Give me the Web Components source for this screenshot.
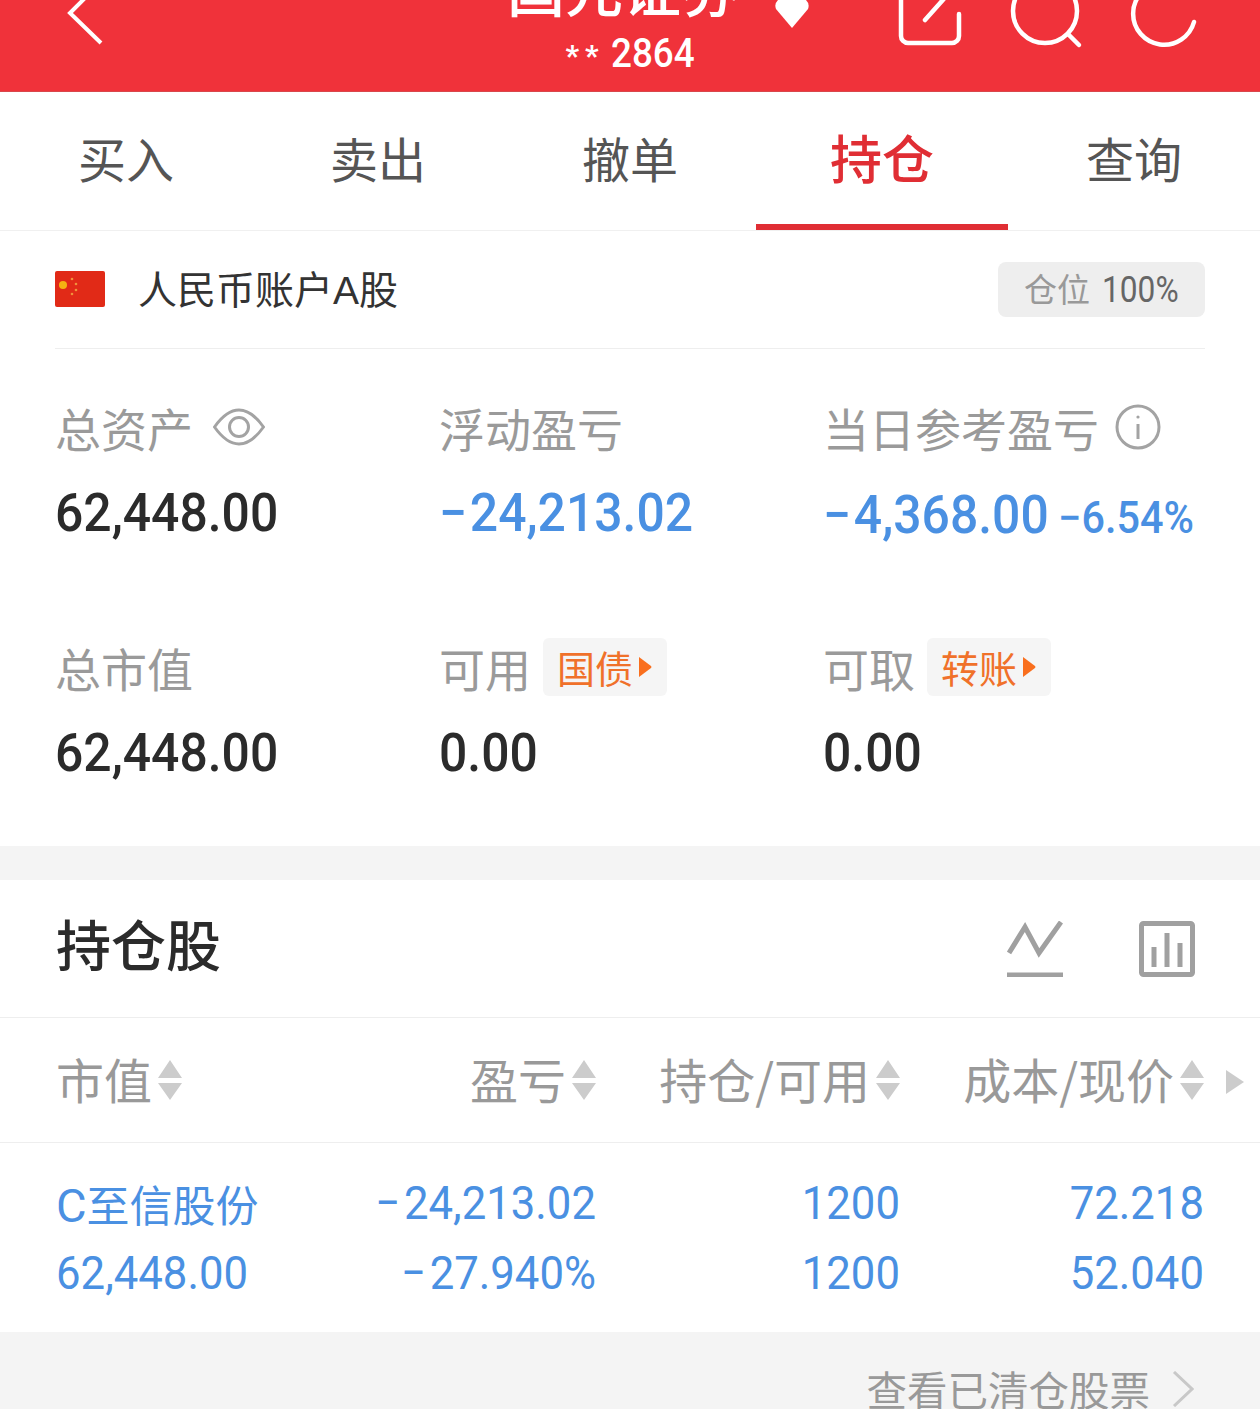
<!DOCTYPE html>
<html lang="zh">
<head>
<meta charset="utf-8">
<style>
  html, body { margin: 0; padding: 0; background: #fff; }
  body { width: 1260px; height: 1409px; overflow: hidden; font-family: "Noto Sans CJK SC", "Roboto", sans-serif; }
</style>
</head>
<body>
<trade-header></trade-header>
<tab-bar></tab-bar>
<account-panel></account-panel>
<holdings-panel></holdings-panel>
<script>
const FONT = `"Noto Sans CJK SC", sans-serif`;
const NUM = `"Roboto", "Noto Sans CJK SC", sans-serif`;

class TradeHeader extends HTMLElement {
  constructor() {
    super();
    this.attachShadow({ mode: "open" }).innerHTML = `
      <style>
        :host { display: grid; grid-template-columns: 1fr 300px 1fr; height: 92px; overflow: hidden; background: #f0323a; box-sizing: border-box; border-bottom: 1px solid #d9474c; color: #fff; }
        svg { display: block; height: 91px; fill: none; stroke: #fff; }
        .title { display: flex; flex-direction: column; align-items: center; }
        .name { position: relative; font: 500 58px/58px ${FONT}; margin: -42px 14px 0 0; white-space: nowrap; }
        .name i { position: absolute; left: 268px; top: 42px; width: 34px; height: 28px; }
        .acct { display: flex; align-items: center; gap: 6px; font: 500 40px/42px ${NUM}; margin-top: 15px; white-space: nowrap; }
        .acct span { display: block; transform: scaleX(.92); transform-origin: left; width: 84px; }
        .acct em { font: 700 30px/42px ${NUM}; font-style: normal; letter-spacing: 6px; padding-top: 4px; }
        .right { display: flex; justify-content: flex-end; padding-right: 60px; }
      </style>
      <svg width="200" viewBox="0 0 200 91" stroke-width="4"><path d="M101 -18 L70 13 L101 43"/></svg>
      <div class="title">
        <div class="name">国元证券<i><svg style="height:28px" width="34" viewBox="0 0 34 28"><path d="M3 0 H31 Q35 4 33 9 L17 28 L1 9 Q-1 4 3 0 Z" fill="#fff" stroke="none"/></svg></i></div>
        <div class="acct"><em>**</em><span>2864</span></div>
      </div>
      <div class="right">
        <svg width="304" viewBox="896 0 304 91" stroke-width="4.5" stroke-linecap="round">
          <path d="M901 -10 V36 a7 7 0 0 0 7 7 H952 a7 7 0 0 0 7-7 V14"/>
          <path d="M925 20 L950 -8"/>
          <circle cx="1045" cy="11" r="32"/>
          <path d="M1068 34 L1079 45"/>
          <path d="M1194 22 A31 31 0 1 1 1160 -17"/>
        </svg>
      </div>`;
  }
}
customElements.define("trade-header", TradeHeader);

class TabBar extends HTMLElement {
  constructor() {
    super();
    const tabs = ["买入", "卖出", "撤单", "持仓", "查询"];
    this.attachShadow({ mode: "open" }).innerHTML = `
      <style>
        :host { display: grid; grid-template-columns: repeat(5, 252px); height: 139px; box-sizing: border-box; border-bottom: 1px solid #f0f0f0; }
        div { display: flex; justify-content: center; align-items: center; height: 138px; padding-bottom: 8px; box-sizing: border-box; font: 400 48px/1 ${FONT}; color: #555; }
        .on { color: #e02e34; font-size: 52px; font-weight: 500; border-bottom: 6px solid #e02e34; padding-bottom: 2px; }
      </style>
      ${tabs.map(t => `<div class="${t === "持仓" ? "on" : ""}">${t}</div>`).join("")}`;
  }
}
customElements.define("tab-bar", TabBar);

class StatCell extends HTMLElement {
  constructor() {
    super();
    this.attachShadow({ mode: "open" }).innerHTML = `
      <style>
        :host { display: block; }
        .label { display: flex; align-items: center; height: 60px; gap: 16px; font: 400 46px/60px ${FONT}; color: #9a9a9a; }
        .value { margin-top: calc(26px + var(--drop, 0px)); height: 60px; white-space: nowrap; font: 500 53px/60px ${NUM}; color: var(--value, #2b2b2b); transform: scaleX(.94); transform-origin: left; }
      </style>
      <div class="label"><slot name="label"></slot></div>
      <div class="value"><slot></slot></div>`;
  }
}
customElements.define("stat-cell", StatCell);

class LinkTag extends HTMLElement {
  constructor() {
    super();
    this.attachShadow({ mode: "open" }).innerHTML = `
      <style>
        :host { display: inline-flex; align-items: center; box-sizing: border-box; width: 124px; height: 58px; margin-left: -4px; padding-left: 14px; background: #f5f5f5; border-radius: 6px; font: 400 38px/1 ${FONT}; color: #f0712a; }
        svg { display: block; margin-left: 5px; }
      </style>
      <slot></slot>
      <svg width="14" height="22" viewBox="0 0 14 22"><path d="M1 1 L13 10 Q14 11 13 12 L1 21 Z" fill="#f96f1e"/></svg>`;
  }
}
customElements.define("link-tag", LinkTag);

class AccountPanel extends HTMLElement {
  constructor() {
    super();
    this.attachShadow({ mode: "open" }).innerHTML = `
      <style>
        :host { display: block; height: 615px; box-sizing: border-box; padding: 0 55px; border-bottom: 0; }
        .acct { display: flex; align-items: center; height: 118px; padding-bottom: 1px; box-sizing: border-box; border-bottom: 1px solid #eeeeee; }
        .flag { display: block; margin-right: 33px; }
        .name { font: 400 39px/1 ${FONT}; color: #333; flex: 1; }
        .name span { font-family: "Liberation Sans", sans-serif; }
        .pos { display: flex; align-items: center; gap: 12px; box-sizing: border-box; width: 207px; height: 55px; padding: 0 0 2px 26px; background: #eeeeee; border-radius: 8px; font: 400 33px/1 ${FONT}; color: #999; }
        .pos b { font: 400 36px/1 ${NUM}; color: #666; transform: scaleX(.88) translateY(2px); transform-origin: left; }
        .stats { display: grid; grid-template-columns: repeat(3, 384px); grid-auto-rows: 240px; padding: 48px 0 0 0; }
        .eye, .info { display: block; }
        .eye { margin-left: 4px; }
        .neg { --value: #4a90e2; }
        .low { --drop: 2px; }
        .m { margin-right: 3px; }
        .sub { font-size: 44px; margin-left: 10px; }
      </style>
      <div class="acct">
        <svg class="flag" width="50" height="36" viewBox="0 0 50 36">
          <rect width="50" height="36" rx="2" fill="#e12a17"/>
          <circle cx="8" cy="14" r="4" fill="#f5b312"/>
          <circle cx="17" cy="8" r="1.3" fill="#f0913a"/><circle cx="21" cy="13" r="1.3" fill="#f0913a"/>
          <circle cx="21" cy="19" r="1.3" fill="#f0913a"/><circle cx="17" cy="23" r="1.3" fill="#f0913a"/>
        </svg>
        <div class="name">人民币账户<span>A</span>股</div>
        <div class="pos">仓位<b>100%</b></div>
      </div>
      <div class="stats">
        <stat-cell>
          <span slot="label">总资产</span>
          <svg slot="label" class="eye" width="52" height="38" viewBox="0 0 52 38" fill="none" stroke="#a3a3a3" stroke-width="3"><path d="M1.5 19 C10 7 18 2 26 2 S42 7 50.5 19 C42 31 34 36 26 36 S10 31 1.5 19 Z"/><circle cx="26" cy="19" r="9.5"/></svg>
          62,448.00
        </stat-cell>
        <stat-cell class="neg">
          <span slot="label">浮动盈亏</span>
          <span class="m">−</span>24,213.02
        </stat-cell>
        <stat-cell class="neg low">
          <span slot="label">当日参考盈亏</span>
          <svg slot="label" class="info" width="46" height="46" viewBox="0 0 46 46" fill="none" stroke="#a3a3a3" stroke-width="3"><circle cx="23" cy="23" r="21"/><path d="M23 20 V35" stroke-width="3"/><circle cx="23" cy="13" r="1.6" fill="#a3a3a3" stroke="none"/></svg>
          <span class="m">−</span>4,368.00<span class="sub">−6.54%</span>
        </stat-cell>
        <stat-cell>
          <span slot="label">总市值</span>
          62,448.00
        </stat-cell>
        <stat-cell>
          <span slot="label">可用</span>
          <link-tag slot="label">国债</link-tag>
          0.00
        </stat-cell>
        <stat-cell>
          <span slot="label">可取</span>
          <link-tag slot="label">转账</link-tag>
          0.00
        </stat-cell>
      </div>`;
  }
}
customElements.define("account-panel", AccountPanel);

class SortHead extends HTMLElement {
  constructor() {
    super();
    this.attachShadow({ mode: "open" }).innerHTML = `
      <style>
        :host { display: flex; align-items: center; gap: 6px; white-space: nowrap; font: 400 48px/1 ${FONT}; color: #999; }
        span { display: block; margin-top: -5px; }
        svg { display: block; flex: none; }
      </style>
      <span><slot></slot></span>
      <svg width="24" height="40" viewBox="0 0 24 40"><path d="M12 0 L24 18 H0 Z M0 23 H24 L12 40 Z" fill="#cccccc"/></svg>`;
  }
}
customElements.define("sort-head", SortHead);

class HoldingsPanel extends HTMLElement {
  constructor() {
    super();
    this.attachShadow({ mode: "open" }).innerHTML = `
      <style>
        :host { display: block; border-top: 34px solid #f4f4f4; }
        .top { display: flex; align-items: center; height: 138px; box-sizing: border-box; padding: 0 65px 0 56px; border-bottom: 1px solid #eeeeee; }
        h2 { flex: 1; margin: 0 0 12px; font: 500 55px/1 ${FONT}; color: #2b2b2b; }
        .top svg { display: block; margin-left: 76px; }
        .grid { display: grid; grid-template-columns: 200px 340px 304px 304px; padding-left: 56px; }
        .heads { height: 124px; align-items: center; border-bottom: 1px solid #eeeeee; position: relative; }
        .heads sort-head { justify-content: flex-end; }
        .heads sort-head:first-child { justify-content: flex-start; }
        .more { position: absolute; left: 1226px; top: 52px; }
        .row { height: 189px; align-content: center; row-gap: 17px; padding-top: 1px; box-sizing: border-box; font: 400 47px/50px ${NUM}; color: #4a90e2; }
        .row span { display: block; text-align: right; white-space: nowrap; transform: scaleX(.93); transform-origin: right; }
        .row span.l { text-align: left; transform-origin: left; }
        .row span.n { font: 400 43px/50px ${FONT}; transform: none; }
        .row span.n em { font: 400 47px/50px ${NUM}; font-style: normal; }
        .row i { font-style: normal; margin-right: 4px; }
        .foot { display: flex; justify-content: flex-end; align-items: center; gap: 22px; box-sizing: border-box; height: 120px; padding: 0 66px 6px 0; background: #f4f4f4; font: 400 40.5px/1 ${FONT}; color: #999; }
      </style>
      <div class="top">
        <h2>持仓股</h2>
        <svg width="56" height="56" viewBox="0 0 56 56" fill="none" stroke="#a0a0a0" stroke-width="5"><path d="M2 32 L18 6 L32 32 L54 1"/><path d="M0 54 H56"/></svg>
        <svg width="56" height="56" viewBox="0 0 56 56" fill="none" stroke="#a0a0a0" stroke-width="5"><rect x="2.5" y="2.5" width="51" height="51" rx="2"/><path d="M15 46 V26 M28 46 V12 M41 46 V22"/></svg>
      </div>
      <div class="grid heads">
        <sort-head>市值</sort-head>
        <sort-head>盈亏</sort-head>
        <sort-head>持仓/可用</sort-head>
        <sort-head>成本/现价</sort-head>
        <svg class="more" width="18" height="24" viewBox="0 0 18 24"><path d="M0 0 L18 12 L0 24 Z" fill="#cccccc"/></svg>
      </div>
      <div class="grid row">
        <span class="l n"><em>C</em>至信股份</span><span><i>−</i>24,213.02</span><span>1200</span><span>72.218</span>
        <span class="l">62,448.00</span><span><i>−</i>27.940%</span><span>1200</span><span>52.040</span>
      </div>
      <div class="foot">
        <span>查看已清仓股票</span>
        <svg width="22" height="36" viewBox="0 0 22 36" fill="none" stroke="#c8c8c8" stroke-width="3"><path d="M2 1 L20 18 L2 35"/></svg>
      </div>`;
  }
}
customElements.define("holdings-panel", HoldingsPanel);
</script>
</body>
</html>
